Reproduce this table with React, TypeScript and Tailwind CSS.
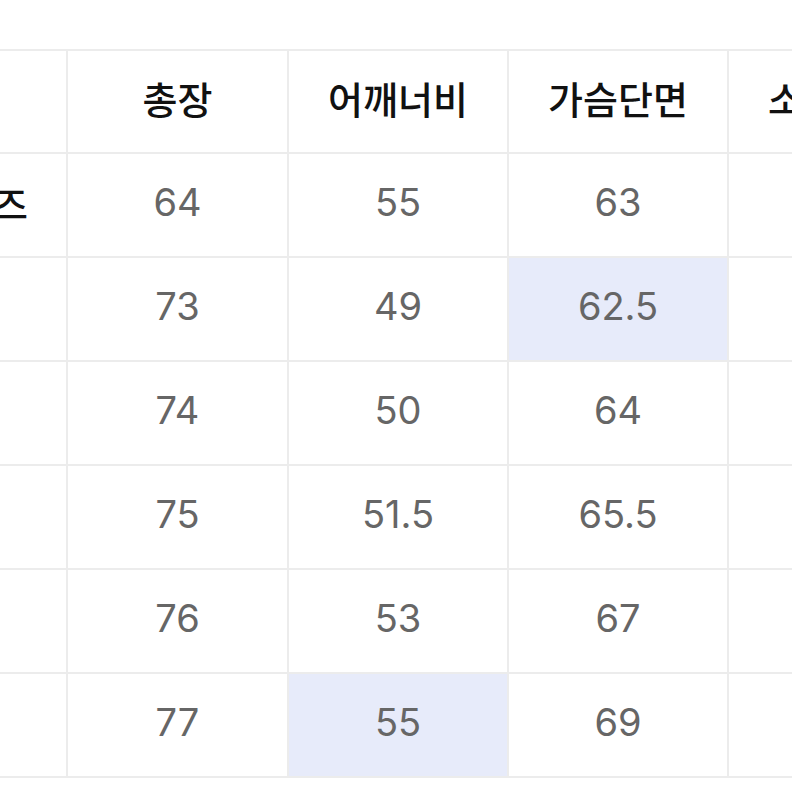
import React from "react";

const headers = ["총장", "어깨너비", "가슴단면", "소매길이"];
const rows: { label: string; values: string[]; hl?: number }[] = [
  { label: "사이즈", values: ["64", "55", "63", "62"] },
  { label: "S", values: ["73", "49", "62.5", "63"], hl: 2 },
  { label: "M", values: ["74", "50", "64", "64"] },
  { label: "L", values: ["75", "51.5", "65.5", "65"] },
  { label: "XL", values: ["76", "53", "67", "66"] },
  { label: "XXL", values: ["77", "55", "69", "67"], hl: 1 },
];

const kr = { fontFamily: '"Noto Sans CJK KR", "Noto Sans", sans-serif' };
const num = { fontFamily: 'Inter, "Liberation Sans", sans-serif' };

export default function App() {
  return (
    <div className="w-[792px] h-[792px] bg-white overflow-hidden">
      <div className="pt-[49px] ml-[-152px]">
        <div className="inline-grid grid-cols-[218px_219px_218px_218px_218px] grid-rows-[101px_repeat(6,102px)] gap-[2px] bg-[#ececec] py-[2px]">
          <div className="bg-white" />
          {headers.map((h) => (
            <div
              key={h}
              className="bg-white flex items-center justify-center text-[38px] font-medium text-[#111] pb-[8px]"
              style={kr}
            >
              {h}
            </div>
          ))}
          {rows.map((r) => (
            <React.Fragment key={r.label}>
              <div
                className="bg-white flex items-center justify-end pr-[38px] text-[38px] font-medium text-[#111] pb-[6px]"
                style={kr}
              >
                {r.label === "사이즈" ? r.label : ""}
              </div>
              {r.values.map((v, i) => (
                <div
                  key={i}
                  className={`${r.hl === i ? "bg-[#e7ebfa]" : "bg-white"} flex items-center justify-center text-[38px] text-[#666] pb-[6px]`}
                  style={num}
                >
                  {v}
                </div>
              ))}
            </React.Fragment>
          ))}
        </div>
      </div>
    </div>
  );
}
